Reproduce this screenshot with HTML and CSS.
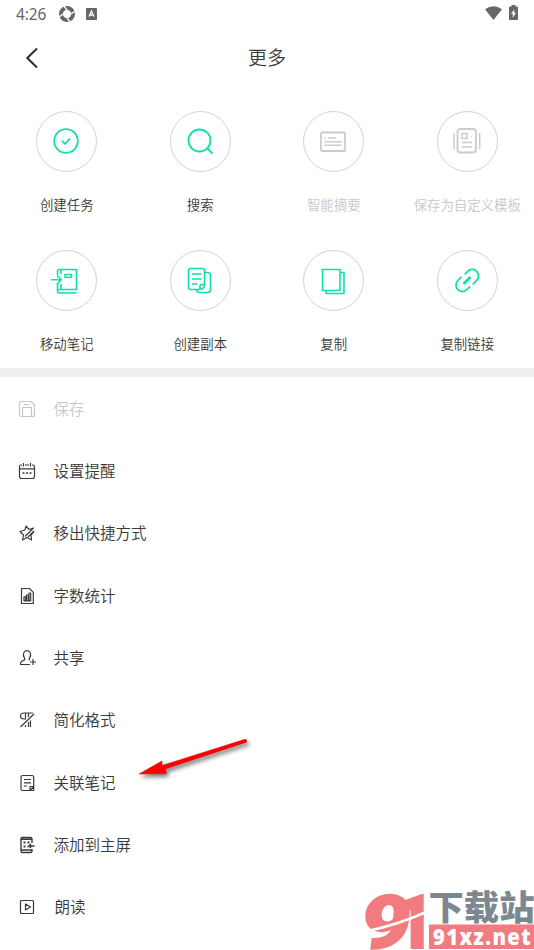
FILE: index.html
```html
<!DOCTYPE html>
<html lang="zh-CN">
<head>
<meta charset="utf-8">
<title>更多</title>
<link rel="stylesheet" href="styles.css">
</head>
<body>
<main class="screen">
  <div class="status">
    <span class="time">4:26</span>
    <svg class="s-ring" viewBox="0 0 16 16"><circle cx="8" cy="8" r="6" fill="none" stroke="#666" stroke-width="4"/><path d="M5 0 8 4M16 5l-4 3M11 16l-3-4M0 11l4-3" stroke="#fff" stroke-width="1.3"/></svg>
    <svg class="s-a" viewBox="0 0 11 12"><rect width="11" height="12" rx="1" fill="#666"/><path d="M3 8.5 5.5 3 8 8.5M4 7h3" fill="none" stroke="#fff" stroke-width="1.3"/></svg>
    <span class="space"></span>
    <svg class="s-wifi" viewBox="0 0 17 14"><path d="M0 3.300Q8.500-3 17 3.300L8.500 14Z" fill="#666"/></svg>
    <svg class="s-bat" viewBox="0 0 9 15"><path d="M2.500 0h4v1.500H8q1 0 1 1V14q0 1-1 1H1q-1 0-1-1V2.500q0-1 1-1h1.500Z" fill="#666"/><path d="M5.500 4 2 9h2l-.5 4L7 7.700H5Z" fill="#fff"/></svg>
  </div>
  <header class="header">
    <svg class="back" viewBox="0 0 14 22"><path d="M12 1.500 2.300 11 12 20.500" fill="none" stroke="#2c2c2c" stroke-width="2"/></svg>
    <h1>更多</h1>
  </header>
  <section class="grid">
    <div class="tile"><div class="ring"><svg viewBox="0 0 30 30"><circle cx="15" cy="15" r="11.800"/><path d="m11 14.800 3 3 5-5.300"/></svg></div><span>创建任务</span></div>
    <div class="tile"><div class="ring"><svg viewBox="0 0 30 30"><circle cx="14.500" cy="14.500" r="11"/><path d="m22.500 22.500 5 5"/></svg></div><span>搜索</span></div>
    <div class="tile off"><div class="ring"><svg viewBox="0 0 30 30"><rect x="3" y="6.500" width="24" height="18.500" rx="1"/><path d="M6.500 12h1.500M10 12h8M6.500 15.700h17M6.500 19.300h17" stroke-width="1.500"/></svg></div><span>智能摘要</span></div>
    <div class="tile off"><div class="ring"><svg viewBox="0 0 30 30"><rect x="5.500" y="3" width="18.500" height="23.500" rx="3"/><path d="M10 7.500h5v5h-5zM18.500 10.700h1M10 16.500h10M10 21h10M2 7v16M27.700 7v16" stroke-width="1.500"/></svg></div><span>保存为自定义模板</span></div>
    <div class="tile"><div class="ring"><svg viewBox="0 0 30 30"><path d="M6.500 9V5q0-1.500 1.500-1.500h17.500v20H8q-1.500 0-1.500 2 0 1.500 1.500 1.500h17.500M6.500 25v-7M10 4v4M10 18v5M0 13.800h10M6 9.500l4.300 4.300L6 18.100M14 8.500h6.500v2.800H14z" stroke-width="1.600"/></svg></div><span>移动笔记</span></div>
    <div class="tile"><div class="ring"><svg viewBox="0 0 30 30"><path d="M5.500 2.500h12q2 0 2 2V18q0 5.500-5 5.500h-9q-2 0-2-2v-17q0-2 2-2ZM7 8h9.500M7 13h9.500M7 18h5M15 23.500V20q0-1.500 1.500-1.500h3M19.500 6.500h3q3 0 3 3V24q0 2.500-3 2.500h-8q-3 0-3-3" stroke-width="1.600"/></svg></div><span>创建副本</span></div>
    <div class="tile"><div class="ring"><svg viewBox="0 0 30 30"><path d="M4.500 3.500h17.500v21h-17.500zM22 6.500h4v21H8v-3" stroke-width="1.600"/></svg></div><span>复制</span></div>
    <div class="tile"><div class="ring"><svg viewBox="0 0 30 30"><path d="m12.700 8.300 3-3a6.300 6.300 0 0 1 9 9l-4 4.200M18 20.500l-3.200 3.200a6.300 6.300 0 0 1-9-9l3.700-3.900"/><path d="m11.500 18 7-7" stroke-width="2.600"/></svg></div><span>复制链接</span></div>
  </section>
  <section class="list">
    <div class="row off"><svg viewBox="0 0 18 18"><path d="M4 1.500h9l3.500 3.500v9.500q0 2-2 2h-11q-2 0-2-2v-11q0-2 2.500-2ZM4.500 16V7.500h9V16M6 4.500h5"/></svg><span>保存</span></div>
    <div class="row"><svg viewBox="0 0 18 18"><path d="M4 3H3Q1.500 3 1.500 4.500V14q0 2.500 2 2.500h11q2 0 2-2.500V4.500Q16.500 3 15 3h-1M7 3h4M1.500 6.800h15M5.500 1v3.500M12.500 1v3.500"/><path d="M4.500 11h2M8 11h2M11.500 11h2" stroke-width="1.600"/></svg><span>设置提醒</span></div>
    <div class="row"><svg viewBox="0 0 18 18"><path d="m7 6 1-4L11 5.500 15.500 4 7 12.500M7 6 2 7.500l3.500 3.500-1 5 4.500-2.500 4.500 2.500-.5-5L16 7.500M10 13l6-6"/></svg><span>移出快捷方式</span></div>
    <div class="row"><svg viewBox="0 0 18 18"><path d="M3.500 1.500h8l3.800 3.800v11.200h-11.800zM6 9.800v4h1.700v-4zM8.500 8v5.800h1.700V8zM11 6v7.800h1.700V6z"/></svg><span>字数统计</span></div>
    <div class="row"><svg viewBox="0 0 18 18"><path d="M12 15.500H2.500q0-3.500 3.500-4.300 1.500-.5.500-2C4 5 6 1.700 9 1.700s5 3.300 2.500 7.500q-1 1.500.5 2M12 13h6M15 10v6"/></svg><span>共享</span></div>
    <div class="row"><svg viewBox="0 0 18 18"><path d="M15 2H6Q2.500 2 2.500 5t3.500 3h1.500V2M10.500 2v4M10.500 11v5M7.500 14v2M2.500 16 16 3M12.500 16V9.500"/></svg><span>简化格式</span></div>
    <div class="row"><svg viewBox="0 0 18 18"><path d="M5 1.500h9q1.700 0 1.700 2v9L12 16.500H4.500q-1.500 0-1.500-1.500V3.500q0-2 2-2ZM6 5.500h7M6 8.800h7M6 12h3M12 16.500v-4h3.700v4z"/></svg><span>关联笔记</span></div>
    <div class="row"><svg viewBox="0 0 18 18"><path d="M14 7V3q0-1.500-1.500-1.500h-8Q3 1.500 3 3v12q0 1.500 1.500 1.500h8q1.500 0 1.500-1.500v-2M3 3.300h11M3 14h11M16.500 10H11M13 8l-2 2 2 2" stroke-width="1.400"/><path d="M5.500 6.500h2M9.500 6.500h2M5.500 10.500h2M9.500 10.500h1" stroke-width="2"/></svg><span>添加到主屏</span></div>
    <div class="row last"><svg viewBox="0 0 18 18"><rect x="2.500" y="2.500" width="13" height="13" rx="1"/><path d="M7.500 6v6l5-3z"/></svg><span>朗读</span></div>
  </section>
  <svg class="arrow" viewBox="0 0 135 60"><path d="M14 44 37 31v4.500L120 9.300q2.500.2 1.500 2.900L40 39l1.500 4.500Z" fill="#f00" stroke="#e00000" stroke-width=".5"/></svg>
  <svg class="mark" viewBox="0 0 180 70">
    <g class="num"><text transform="translate(5 67.500) skewX(-7) scale(1.150 1)" font-size="74">9</text><text transform="translate(41 67.500) scale(.92 1)" font-size="74">1</text></g>
    <path d="M9 52q35-7 63-20" fill="none" stroke="#fff" stroke-width="2.500"/>
    <text class="site" x="74.500" y="40" font-size="34" textLength="106" lengthAdjust="spacingAndGlyphs">下载站</text>
    <rect x="75" y="44.500" width="105" height="24.500" fill="#f27b7f"/>
    <text class="url" transform="translate(79 65) scale(.92 1)" font-size="22" textLength="106">91xz.net</text>
  </svg>
</main>
</body>
</html>
```
FILE: styles.css
```css
* { box-sizing: border-box; }
body { margin: 0; background: #fff; color: #3a3a3a; font-family: "Noto Sans CJK SC", sans-serif; font-weight: 350; }
.screen { position: relative; width: 534px; height: 950px; overflow: hidden; }
.status { display: flex; align-items: center; height: 28px; padding: 0 16px 0 16px; }
.time { width: 31px; font: 15.500px/28px "Noto Sans", sans-serif; letter-spacing: -.1px; color: #666; }
.s-ring { width: 16px; height: 16px; margin: 0 0 1px 12px; }
.s-a { width: 11px; height: 12px; margin-left: 11px; }
.space { flex: 1; }
.s-wifi { width: 17px; height: 14px; margin: 0 7px 3px 0; }
.s-bat { width: 9px; height: 15px; margin-bottom: 3px; }
.header { display: grid; grid-template-columns: 40px 1fr 40px; align-items: center; height: 60px; }
.back { width: 14px; height: 22px; margin-left: 24.500px; }
h1 { margin: -2px 0 0; text-align: center; font-size: 19px; line-height: 28px; font-weight: inherit; }
.grid { display: grid; grid-template-columns: repeat(4, 1fr); grid-template-rows: 139.500px 140px; height: 289px; padding-top: 22.500px; border-bottom: 9px solid #eeeff1; }
.tile { display: flex; flex-direction: column; align-items: center; font-size: 13.400px; line-height: 20px; white-space: nowrap; }
.ring { display: grid; place-items: center; width: 61px; height: 61px; margin-bottom: 22px; border: 1px solid #d2d2d2; border-radius: 50%; }
.ring svg { width: 30px; height: 30px; margin-right: 1px; fill: none; stroke: #0de0aa; stroke-width: 1.800; stroke-linejoin: round; }
.off { color: #c8c8c8; }
.off .ring svg { stroke: #ccc; }
.row { display: flex; align-items: center; height: 62.350px; padding-left: 17.500px; font-size: 15.500px; line-height: 24px; }
.row span { margin-top: -1px; }
.row svg { width: 18px; height: 18px; margin: 1px 18px 0 0; fill: none; stroke: currentColor; stroke-width: 1.200; stroke-linejoin: round; }
.last svg { margin-right: 19px; }
.arrow { position: absolute; left: 125px; top: 730px; width: 135px; height: 60px; overflow: visible; filter: drop-shadow(2px 3px 2px #0008); }
.mark { position: absolute; left: 354px; top: 880px; width: 180px; height: 70px; }
.num { fill: #f27b7f; stroke: #f27b7f; stroke-width: 2; font-family: Roboto, sans-serif; font-weight: 900; }
.site { fill: #7d878f; font-family: "Noto Sans CJK SC", sans-serif; font-weight: 900; }
.url { fill: #fff; font-family: "Open Sans", sans-serif; font-weight: 800; }
```
